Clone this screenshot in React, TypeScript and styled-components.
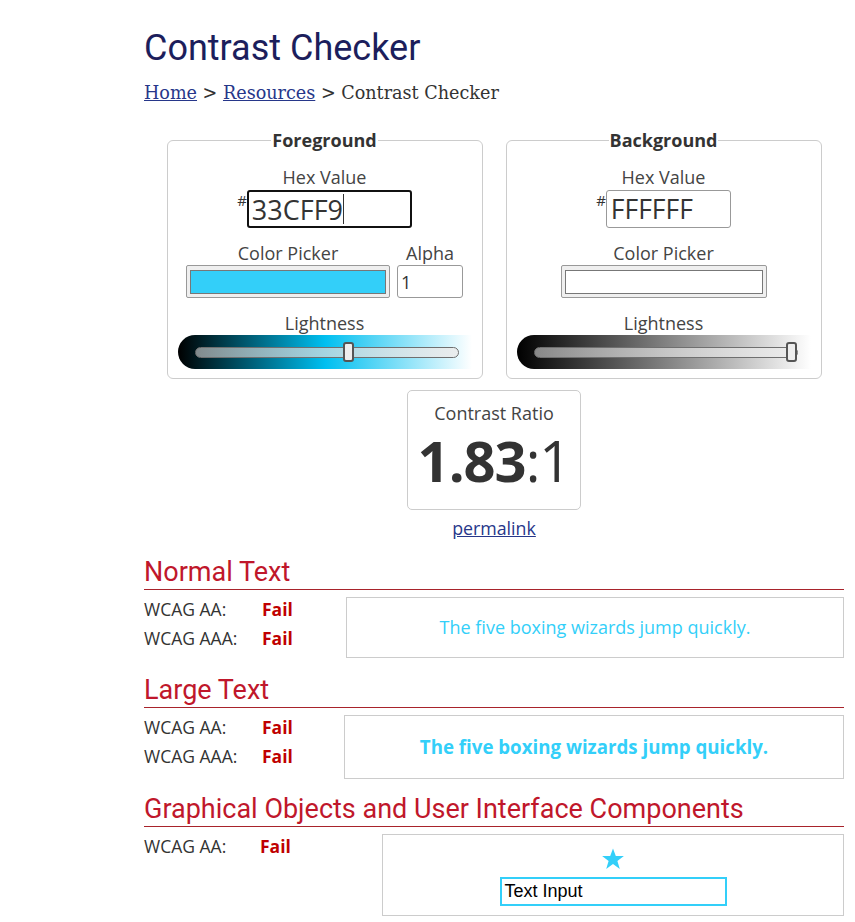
import React from 'react'
import styled, { createGlobalStyle } from 'styled-components'

const GlobalStyle = createGlobalStyle`
  html, body {
    margin: 0;
    padding: 0;
    background: #ffffff;
  }
  body {
    font-family: "Open Sans", "Liberation Sans", sans-serif;
    color: #333333;
  }
`

const Page = styled.div`
  width: 700px;
  padding: 25px 0 0 144px;
`

const Title = styled.h1`
  margin: 0;
  font-family: Roboto, "Liberation Sans", sans-serif;
  font-weight: 400;
  font-size: 36px;
  line-height: 46px;
  color: #1c1e5c;
`

const Crumbs = styled.nav`
  margin-top: 10px;
  font-family: "DejaVu Serif", "Liberation Serif", serif;
  font-size: 17.6px;
  line-height: 24px;
  color: #333333;

  a {
    color: #27378a;
    text-decoration: underline;
  }
`

const Pickers = styled.div`
  display: flex;
  justify-content: center;
  gap: 23px;
  margin-top: 23px;
`

const Set = styled.fieldset`
  width: 316px;
  box-sizing: border-box;
  margin: 0;
  padding: 13px 0 9px;
  border: 1px solid #cccccc;
  border-radius: 6px;
  display: flex;
  flex-direction: column;
  align-items: center;
`

const Legend = styled.legend`
  margin: 0 auto;
  padding: 0 1px;
  font-weight: 700;
  font-size: 18px;
  line-height: 24px;
  color: #333333;
`

const Label = styled.div`
  font-size: 18px;
  line-height: 24px;
  color: #444444;
  text-align: center;
`

const HexRow = styled.div`
  display: flex;
  align-items: flex-start;
  margin-top: 1px;
`

const Hash = styled.span`
  font-size: 15px;
  line-height: 15px;
  margin-top: 3px;
  color: #333333;
`

const HexBox = styled.div<{ $w: number; $focused?: boolean }>`
  position: relative;
  width: ${p => p.$w}px;
  height: 38px;
  box-sizing: border-box;
  border: ${p => (p.$focused ? '2px solid #111111' : '1px solid #999999')};
  border-radius: 3px;
  padding-left: ${p => (p.$focused ? 3 : 4)}px;
  display: flex;
  align-items: center;
  font-size: ${p => (p.$focused ? 27 : 26.5)}px;
  color: #333333;
  background: #ffffff;
`

const Caret = styled.span`
  position: absolute;
  left: 94px;
  top: 2px;
  bottom: 2px;
  width: 1px;
  background: #333333;
`

const PickerRow = styled.div`
  display: flex;
  gap: 7px;
  margin-top: 13px;
`

const PickerCol = styled.div`
  display: flex;
  flex-direction: column;
  align-items: center;
`

const Swatch = styled.div<{ $w: number; $color: string }>`
  width: ${p => p.$w}px;
  height: 33px;
  box-sizing: border-box;
  border: 1px solid #999999;
  border-radius: 2px;
  background: #efefef;
  padding: 4px 3px 3px;

  &::after {
    content: '';
    display: block;
    height: 100%;
    box-sizing: border-box;
    border: 1px solid #777777;
    background: ${p => p.$color};
  }
`

const AlphaBox = styled.div`
  width: 66px;
  height: 33px;
  box-sizing: border-box;
  border: 1px solid #999999;
  border-radius: 3px;
  padding-left: 3px;
  display: flex;
  align-items: center;
  font-size: 18px;
  color: #333333;
`

const LightBlock = styled.div`
  margin-top: 13px;
  display: flex;
  flex-direction: column;
  align-items: center;
`

const Slider = styled.div<{ $mid: string }>`
  position: relative;
  width: 294px;
  height: 34px;
  border-radius: 17px 0 0 17px;
  background: linear-gradient(to right, #000000 0%, ${p => p.$mid} 50%, #ffffff 100%);
`

const Track = styled.div`
  position: absolute;
  left: 17px;
  right: 13px;
  top: 12px;
  height: 11px;
  box-sizing: border-box;
  border: 1px solid #6f6f6f;
  border-radius: 6px;
  background: linear-gradient(to right, rgba(200, 200, 200, 0.65), rgba(235, 235, 235, 0.85));
`

const Thumb = styled.div<{ $pos: number }>`
  position: absolute;
  top: 7px;
  left: ${p => p.$pos}px;
  width: 11px;
  height: 20px;
  box-sizing: border-box;
  border: 2px solid #555555;
  border-radius: 3px;
  background: #eeeeee;
`

const RatioBox = styled.div`
  width: 174px;
  height: 120px;
  box-sizing: border-box;
  margin: 11px auto 0;
  border: 1px solid #cccccc;
  border-radius: 5px;
  display: flex;
  flex-direction: column;
  align-items: center;
  padding-top: 10px;
`

const RatioLabel = styled.div`
  font-size: 18px;
  line-height: 24px;
  color: #444444;
`

const Ratio = styled.div`
  font-size: 56px;
  line-height: 64px;
  margin-top: 3px;
  color: #333333;
  letter-spacing: -1px;

  b {
    font-weight: 700;
  }
`

const Permalink = styled.a`
  display: block;
  width: max-content;
  margin: 6px auto 0;
  font-size: 17.8px;
  line-height: 24px;
  color: #27378a;
  text-decoration: underline;
`

const Section = styled.section<{ $top: number }>`
  margin-top: ${p => p.$top}px;
`

const Heading = styled.h2`
  margin: 0;
  font-family: Roboto, "Liberation Sans", sans-serif;
  font-weight: 400;
  font-size: 27px;
  line-height: 32px;
  color: #c0172b;
  border-bottom: 1px solid #a8232b;
  padding-bottom: 1px;
`

const Body = styled.div`
  display: flex;
  align-items: flex-start;
  margin-top: 7px;
`

const Results = styled.div<{ $w: number }>`
  width: ${p => p.$w}px;
  flex: none;
  display: flex;
  flex-direction: column;
  gap: 5px;
`

const ResultRow = styled.div<{ $label: number }>`
  display: grid;
  grid-template-columns: ${p => p.$label}px auto;
  font-size: 17.5px;
  line-height: 24px;
  color: #333333;
`

const Fail = styled.span`
  font-weight: 700;
  color: #c00000;
`

const Sample = styled.div<{ $h: number; $bold?: boolean }>`
  flex: 1;
  height: ${p => p.$h}px;
  box-sizing: border-box;
  border: 1px solid #cccccc;
  display: flex;
  align-items: center;
  justify-content: center;
  color: #33cff9;
  font-size: ${p => (p.$bold ? 18.7 : 18)}px;
  font-weight: ${p => (p.$bold ? 700 : 400)};
  padding-bottom: 1px;
`

const UiSample = styled.div`
  flex: 1;
  height: 82px;
  box-sizing: border-box;
  border: 1px solid #cccccc;
  display: flex;
  flex-direction: column;
  align-items: center;
  padding-top: 12px;
`

const Star = styled.svg`
  width: 24px;
  height: 24px;
  display: block;
`

const TextInput = styled.div`
  width: 227px;
  height: 29px;
  box-sizing: border-box;
  margin-top: 6px;
  border: 2px solid #33cff9;
  padding-left: 3px;
  display: flex;
  align-items: center;
  font-family: "Liberation Sans", Arial, sans-serif;
  font-size: 18px;
  color: #000000;
`

const Result = ({ label, width }: { label: string; width: number }) => (
  <ResultRow $label={width}>
    <span>{label}</span>
    <Fail>Fail</Fail>
  </ResultRow>
)

export default function App() {
  return (
    <>
      <GlobalStyle />
      <Page>
        <Title>Contrast Checker</Title>
        <Crumbs>
          <a href="#">Home</a> &gt; <a href="#">Resources</a> &gt; Contrast Checker
        </Crumbs>

        <Pickers>
          <Set>
            <Legend>Foreground</Legend>
            <Label>Hex Value</Label>
            <HexRow>
              <Hash>#</Hash>
              <HexBox $w={165} $focused>
                33CFF9
                <Caret />
              </HexBox>
            </HexRow>
            <PickerRow>
              <PickerCol>
                <Label>Color Picker</Label>
                <Swatch $w={204} $color="#33cff9" />
              </PickerCol>
              <PickerCol>
                <Label>Alpha</Label>
                <AlphaBox>1</AlphaBox>
              </PickerCol>
            </PickerRow>
            <LightBlock>
              <Label>Lightness</Label>
              <Slider $mid="#00bff0">
                <Track />
                <Thumb $pos={165} />
              </Slider>
            </LightBlock>
          </Set>

          <Set>
            <Legend>Background</Legend>
            <Label>Hex Value</Label>
            <HexRow>
              <Hash>#</Hash>
              <HexBox $w={125}>FFFFFF</HexBox>
            </HexRow>
            <PickerRow>
              <PickerCol>
                <Label>Color Picker</Label>
                <Swatch $w={206} $color="#ffffff" />
              </PickerCol>
            </PickerRow>
            <LightBlock>
              <Label>Lightness</Label>
              <Slider $mid="#808080">
                <Track />
                <Thumb $pos={269} />
              </Slider>
            </LightBlock>
          </Set>
        </Pickers>

        <RatioBox>
          <RatioLabel>Contrast Ratio</RatioLabel>
          <Ratio>
            <b>1.83</b>:1
          </Ratio>
        </RatioBox>
        <Permalink href="#">permalink</Permalink>

        <Section $top={16}>
          <Heading>Normal Text</Heading>
          <Body>
            <Results $w={202}>
              <Result label="WCAG AA:" width={118} />
              <Result label="WCAG AAA:" width={118} />
            </Results>
            <Sample $h={61}>The five boxing wizards jump quickly.</Sample>
          </Body>
        </Section>

        <Section $top={16}>
          <Heading>Large Text</Heading>
          <Body>
            <Results $w={200}>
              <Result label="WCAG AA:" width={118} />
              <Result label="WCAG AAA:" width={118} />
            </Results>
            <Sample $h={64} $bold>
              The five boxing wizards jump quickly.
            </Sample>
          </Body>
        </Section>

        <Section $top={14}>
          <Heading>Graphical Objects and User Interface Components</Heading>
          <Body>
            <Results $w={238}>
              <Result label="WCAG AA:" width={116} />
            </Results>
            <UiSample>
              <Star viewBox="0 0 24 24">
                <path
                  fill="#33cff9"
                  d="M12 1.5l2.8 7.6h8.1l-6.5 4.9 2.4 7.9L12 17.1l-6.8 4.8 2.4-7.9L1.1 9.1h8.1z"
                />
              </Star>
              <TextInput>Text Input</TextInput>
            </UiSample>
          </Body>
        </Section>
      </Page>
    </>
  )
}
